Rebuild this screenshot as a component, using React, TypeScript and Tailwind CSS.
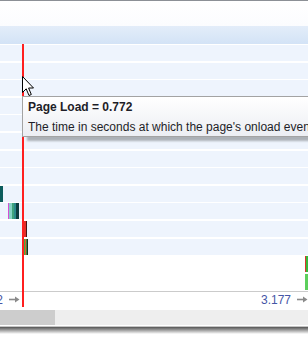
import React from 'react';

interface Seg {
  w: number;
  color: string;
}

interface Bar {
  left: number;
  segs: Seg[];
}

interface Row {
  shaded: boolean;
  bar?: Bar;
}

const rows: Row[] = [
  { shaded: true },
  { shaded: true },
  { shaded: true },
  { shaded: true },
  { shaded: true },
  { shaded: true },
  { shaded: true },
  { shaded: true },
  { shaded: true, bar: { left: 0, segs: [{ w: 3, color: '#0c5c5c' }] } },
  {
    shaded: true,
    bar: {
      left: 8,
      segs: [
        { w: 1, color: '#d64fd6' },
        { w: 3, color: '#86d4c6' },
        { w: 2, color: '#3fa37c' },
        { w: 2, color: '#2a8a8a' },
        { w: 3, color: '#0c3d3f' },
      ],
    },
  },
  {
    shaded: true,
    bar: {
      left: 24,
      segs: [
        { w: 2, color: '#e3302a' },
        { w: 1, color: '#4a1414' },
      ],
    },
  },
  {
    shaded: true,
    bar: {
      left: 24,
      segs: [
        { w: 1, color: '#3cb043' },
        { w: 1, color: '#e2572a' },
        { w: 1, color: '#3c8f3c' },
        { w: 1, color: '#1c2b1c' },
      ],
    },
  },
  {
    shaded: false,
    bar: {
      left: 305,
      segs: [
        { w: 1, color: '#d9362b' },
        { w: 3, color: '#35b83a' },
      ],
    },
  },
  { shaded: false, bar: { left: 305, segs: [{ w: 3, color: '#5ccf5c' }] } },
];

function Arrow() {
  return (
    <svg width="11" height="7" viewBox="0 0 11 7" className="shrink-0">
      <path d="M0 3.5 H8" stroke="#8a8a8a" strokeWidth="1.6" />
      <path d="M6 0.5 L10.5 3.5 L6 6.5 Z" fill="#8a8a8a" />
    </svg>
  );
}

function Cursor() {
  return (
    <svg width="13" height="21" viewBox="0 0 13 21" className="absolute left-[22px] top-[76px]">
      <path
        d="M0.5 0.5 L0.5 16.5 L4.2 12.8 L7 19.5 L9.3 18.5 L6.6 12 L11.5 12 Z"
        fill="#ffffff"
        stroke="#000000"
        strokeWidth="1"
        strokeLinejoin="miter"
      />
    </svg>
  );
}

export default function App() {
  return (
    <div className="relative w-[308px] h-[344px] overflow-hidden bg-white font-['Liberation_Sans','Open_Sans',sans-serif]">
      <div className="h-px bg-[#8c9096]" />
      <div className="h-[25px] bg-gradient-to-b from-white to-[#fbfcfe]" />
      <div className="h-[18px] bg-gradient-to-b from-[#e3edf9] to-[#d3e3f6]" />

      {/* waterfall rows */}
      <div className="h-[247px] pt-px flex flex-col gap-[1.6px]">
        {rows.map((row, i) => (
          <div key={i} className={`relative h-[16px] shrink-0 ${row.shaded ? 'bg-[#eef4fd]' : 'bg-white'}`}>
            {row.bar && (
              <div className="absolute top-0 h-full flex" style={{ left: row.bar.left }}>
                {row.bar.segs.map((s, j) => (
                  <div key={j} className="h-full" style={{ width: s.w, background: s.color }} />
                ))}
              </div>
            )}
          </div>
        ))}
      </div>

      {/* axis */}
      <div className="h-[16px] border-t border-[#cbcbcb] flex items-center justify-between text-[12px] text-[#4556a6]">
        <div className="flex items-center gap-[6px] ml-[-27px]">
          <span>0.772</span>
          <Arrow />
        </div>
        <div className="flex items-center gap-[6px]">
          <span>3.177</span>
          <Arrow />
        </div>
      </div>

      {/* scrollbar */}
      <div className="mt-[3px] h-[15px] flex bg-[#eeeeee]">
        <div className="w-[55px] bg-[#cdcdcd]" />
      </div>

      {/* window bottom shadow */}
      <div className="mt-px h-px bg-[#c4c4c4]" />
      <div className="h-[7px] bg-gradient-to-b from-[#555555] via-[#a8a8a8] to-white" />

      {/* page load marker */}
      <div className="absolute left-[22px] top-[44px] w-[2px] h-[263px] bg-[#ff1f1f]" />

      <Cursor />

      {/* tooltip */}
      <div className="absolute left-[22px] top-[96px] w-[320px] h-[41px] border border-[#a3a3a3] bg-gradient-to-b from-white to-[#eceef3] shadow-[5px_4px_2px_rgba(0,0,0,0.28)] px-[5px] pt-[3px] text-[12px] text-[#1e1e28] whitespace-nowrap">
        <div className="font-bold leading-[15px]">Page Load = 0.772</div>
        <div className="mt-[5px] leading-[15px]">The time in seconds at which the page's onload event fired</div>
      </div>
    </div>
  );
}
